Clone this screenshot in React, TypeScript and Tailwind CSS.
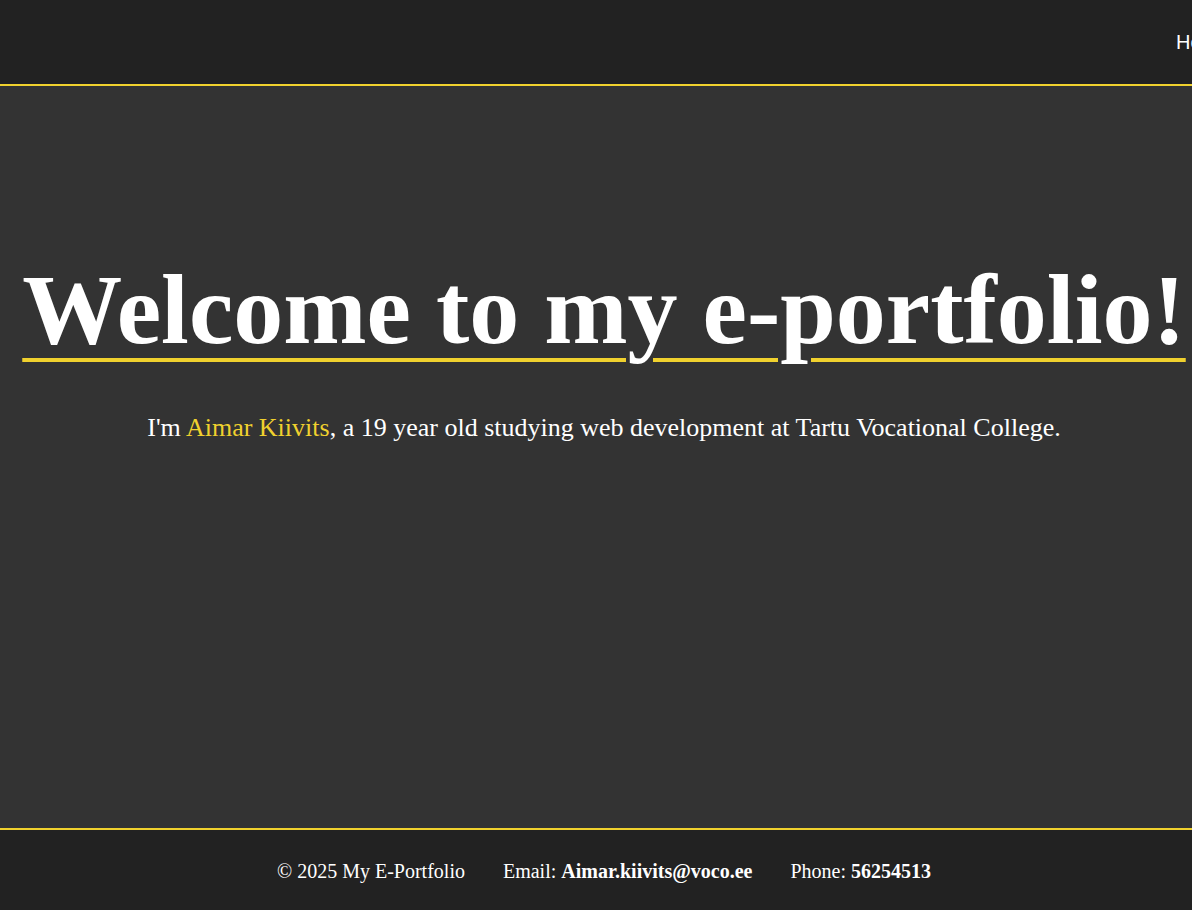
import React from "react";

export default function App() {
  return (
    <div className="w-[1192px] h-[910px] overflow-hidden bg-[#333333]">
      <div className="w-[1208px] flex flex-col" style={{ fontFamily: '"Liberation Serif", "Times New Roman", serif' }}>
        <header className="h-[86px] bg-[#222222] border-b-2 border-[#f0d12e] flex items-center pl-[1176px]">
          <nav className="flex flex-none gap-8 text-[20px] text-white" style={{ fontFamily: '"Liberation Sans", Arial, sans-serif' }}>
            <span>Home</span>
            <span>About</span>
            <span>Projects</span>
            <span>Contact</span>
          </nav>
        </header>
        <main className="h-[742px] flex flex-col items-center text-white">
          <h1 className="mt-[174px] text-[100px] leading-none font-bold underline decoration-[#f0d12e] decoration-[4px] underline-offset-[15px] whitespace-nowrap">
            Welcome to my e-portfolio!
          </h1>
          <p className="mt-[55px] text-[26px] leading-none whitespace-nowrap">
            I'm <span className="text-[#f0d12e]">Aimar Kiivits</span>, a 19 year old studying web development at Tartu Vocational College.
          </p>
        </main>
        <footer className="h-[120px] bg-[#222222] border-t-2 border-[#f0d12e] flex justify-center gap-[38px] pt-[31px] text-[20px] leading-none text-white whitespace-nowrap">
          <span>© 2025 My E-Portfolio</span>
          <span>Email: <b>Aimar.kiivits@voco.ee</b></span>
          <span>Phone: <b>56254513</b></span>
        </footer>
      </div>
    </div>
  );
}
